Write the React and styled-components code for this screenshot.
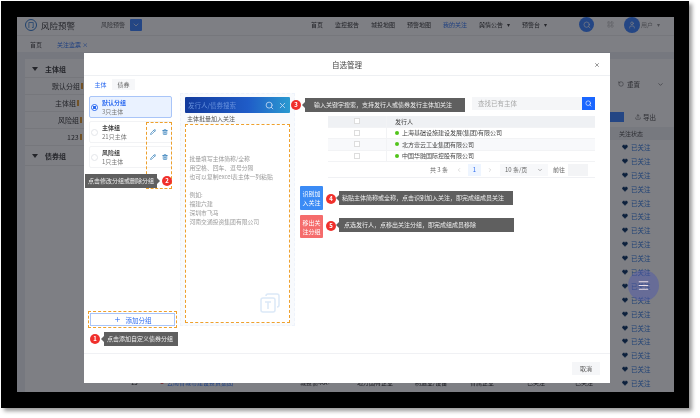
import React from "react";
import styled, { createGlobalStyle } from "styled-components";
import { Search, X, Pencil, Trash2, Plus, Heart, ChevronDown, ChevronLeft, ChevronRight, Menu, Upload, RotateCcw, LayoutGrid, User } from "lucide-react";

const Global = createGlobalStyle`
  html, body { margin: 0; padding: 0; background: #fff; width: 700px; height: 418px; overflow: hidden; }
  * { box-sizing: border-box; }
  body { font-family: "Noto Sans CJK SC", "Noto Sans", sans-serif; color: #555; }
`;
const Frame = styled.div`
  margin: 1px 0 0 1px; width: 688px; height: 407px; padding: 16px 15px 16px 16px;
  background: #000; box-shadow: 3px 3px 4px #999; filter: blur(.6px);
`;
const Page = styled.div`
  position: relative; width: 657px; height: 375px; overflow: hidden;
  background: #eef0f4; display: flex; flex-direction: column;
`;
const Dim = styled.div`position: absolute; inset: 0; background: rgba(8,10,20,.52);`;
const Header = styled.header`
  height: 18px; background: #fff; display: flex; align-items: center; font-size: 6px; color: #333; padding: 0 0 3px 8px; flex: none;
`;
const Logo = styled.div`
  width: 12px; height: 12px; border-radius: 50%; border: 1.5px solid #3a7fd0; color: #3a7fd0; flex: none;
  font-size: 6px; line-height: 9px; text-align: center; font-weight: 700;
`;
const Brand = styled.span`font-size: 8.5px; margin: 0 24px 0 4px; width: 36px; white-space: nowrap; color: #444; flex: none;`;
const Scope = styled.span`width: 29px; color: #666; flex: none;`;
const BlueSquare = styled.span`width: 12px; height: 12px; background: #4488ff; border-radius: 1px; display: flex; align-items: center; justify-content: center; color: #fff; flex: none;`;
const Nav = styled.nav`display: flex; align-items: center; margin-left: 169px; width: 262px; font-size: 6px; gap: 12px; flex: none;`;
const NavItem = styled.span`white-space: nowrap; display: inline-flex; align-items: center; gap: 4px; margin-left: ${p => p.$ml || 0}px; color: ${p => p.$on ? "#3a7cf5" : p.$mute ? "#999" : "#444"};`;
const Circle = styled.span`
  width: ${p => p.$s}px; height: ${p => p.$s}px; border-radius: 50%; background: #4488ff; color: #fff; flex: none; margin-left: ${p => p.$ml || 0}px;
  display: flex; align-items: center; justify-content: center;
`;
const Dots = styled(LayoutGrid)`margin: 0 10px 0 13px; color: #bbb; flex: none;`;
const TabBar = styled.div`
  height: 17px; background: #fff; border-top: 1px solid #eee; display: flex; align-items: center; gap: 15px; padding-left: 13px; font-size: 6px; flex: none;
`;
const TabItem = styled.span`color: ${p => p.$on ? "#3a7cf5" : "#555"};`;
const Content = styled.div`flex: 1; display: flex; padding: 7px 0 0 8px; min-height: 0;`;
const TreeCard = styled.div`width: 90px; background: #fff; padding: 1px 0; font-size: 7px; flex: none;`;
const TreeRow = styled.div`
  height: ${p => p.$h || 17}px; display: flex; align-items: center; padding-left: ${p => p.$indent || 7}px; gap: 7px; border-bottom: 1px solid #eee; color: #444; font-weight: ${p => p.$b ? 700 : 400};
`;
const Caret = styled.span`width: 0; height: 0; border-left: 3px solid transparent; border-right: 3px solid transparent; border-top: 4px solid #444;`;
const TinyMark = styled.span`width: 5px; height: 5px; border: 1px solid #bbb; margin-left: 12px;`;
const OrangeMark = styled.span`width: 2px; height: 6px; background: #e6a23c; margin-left: -6px;`;
const MidTable = styled.div`flex: 1; background: #fff; display: flex; flex-direction: column; justify-content: flex-end; padding: 0 0 3px 16px; font-size: 6px; color: #333;`;
const MidRow = styled.div`display: flex; height: 14px; align-items: center; white-space: nowrap;`;
const MidCell = styled.span`width: ${p => p.$w}px; flex: none; display: flex; align-items: center; gap: 3px; color: ${p => p.$link ? "#3a7cf5" : "#333"};`;
const RedHeart = styled.span`width: 4px; height: 4px; border-radius: 50%; background: #e04040;`;
const RightTable = styled.div`width: 64px; background: #fff; padding: 19px 0 0 0; font-size: 6.5px; display: flex; flex-direction: column; align-items: center; flex: none;`;
const SmallBtn = styled.div`height: 12px; display: flex; align-items: center; gap: 3px; font-size: 6.5px; color: #555; align-self: flex-start; margin-left: 8px;`;
const ExportRow = styled.div`display: flex; align-items: center; align-self: stretch; gap: 11px; margin-top: 21px; height: 12px;`;
const PrimaryStub = styled.span`width: 14px; height: 10px; background: #4488ff; flex: none;`;
const StubOutline = styled.span`display: inline-flex; gap: 2px; align-items: center; color: #555;`;
const StatusHead = styled.div`align-self: stretch; height: 13px; background: #f0f2f5; margin-top: 4px; padding-left: 9px; line-height: 13px; font-size: 6px;`;
const Status = styled.div`
  height: 13.9px; align-self: stretch; padding-left: 12px; display: flex; align-items: center; gap: 3px; color: #3a7fe0; font-size: 6.5px; flex: none;
  svg { color: #123a6a; fill: #123a6a; }
`;
const Modal = styled.section`
  position: absolute; left: 67px; top: 36px; width: 526px; height: 330px; background: #fff; display: flex; flex-direction: column; color: #555;
`;
const ModalHead = styled.div`
  height: 23px; border-bottom: 1px solid #eef0f3; display: flex; align-items: center; justify-content: center; position: relative; font-size: 7.5px; color: #444; flex: none;
  svg { position: absolute; right: 10px; top: 9px; color: #333; }
`;
const Body = styled.div`flex: 1; display: flex; padding-left: 5px; min-height: 0;`;
const LeftCol = styled.div`width: 88px; display: flex; flex-direction: column; padding-top: 3px; flex: none;`;
const ModalTabs = styled.div`display: flex; height: 11px; font-size: 6px; align-items: center; margin-bottom: 6px; background: #f6f7f9; width: 46px;`;
const ModalTab = styled.span`
  width: 23px; height: 11px; line-height: 11px; text-align: center; background: ${p => p.$on ? "#fff" : "transparent"}; color: ${p => p.$on ? "#2d6bf0" : "#666"};
`;
const GroupCard = styled.div`
  width: 83px; height: 22px; margin-bottom: 3px; border-radius: 2px; display: flex; align-items: center; gap: 4px; padding-left: 1px;
  border: 1px solid ${p => p.$on ? "#a9c5f8" : "#f2f3f5"}; background: ${p => p.$on ? "#eaf2ff" : "#fff"}; flex: none; font-size: 6px;
`;
const Radio = styled.span`
  width: 7px; height: 7px; border-radius: 50%; flex: none; border: 1px solid ${p => p.$on ? "#2d6bf0" : "#e4e6ea"};
  background: ${p => p.$on ? "radial-gradient(circle, #2d6bf0 45%, #fff 50%)" : "#fff"};
`;
const GroupText = styled.div`flex: 1; line-height: 9px;`;
const GroupName = styled.div`font-weight: 700; color: ${p => p.$on ? "#2d6bf0" : "#444"};`;
const GroupSub = styled.div`color: #777;`;
const GroupIcons = styled.div`display: flex; gap: 6px; color: #2d7ab8; margin-right: 3px; svg { stroke-width: 2.6; }`;
const AddWrap = styled.div`margin-top: auto; margin-bottom: 25px; width: 89px; margin-left: -1px; height: 17px; border: 1px dashed #eea02c; padding: 1px; flex: none;`;
const AddBtn = styled.div`
  height: 13px; border: 1px solid #a9c5f8; color: #2d6bf0; display: flex; align-items: center; justify-content: center; gap: 5px; font-size: 6.5px;
`;
const CenterPanel = styled.div`
  width: 115px; margin: 17px 0 0 3px; height: 233px; border: 1px dashed #eef3fb; background: #f8fafd; padding: 3px 4px 2px; display: flex; flex-direction: column; flex: none;
`;
const SearchBar = styled.div`
  height: 16px; background: linear-gradient(90deg, #123a9c 0%, #1f5cc8 60%, #2a9ad0 100%); display: flex; align-items: center; gap: 4px; padding: 0 3px; color: #d5e3f7; flex: none; border-radius: 1px;
`;
const SearchHint = styled.span`flex: 1; font-size: 6.5px; color: #6690dc;`;
const BatchLabel = styled.div`font-size: 6px; color: #555; height: 10px; line-height: 10px; margin: 1px 0 0 2px; flex: none;`;
const PasteBox = styled.div`
  flex: 1; background: #fff; border: 1.5px dashed #eea02c; position: relative; padding: 28.5px 3.5px 0; font-size: 5.8px; line-height: 9px; color: #999;
  p { margin: 0 0 9px; white-space: nowrap; }
`;
const Watermark = styled.svg`position: absolute; right: 9px; bottom: 9px;`;
const RightCol = styled.div`flex: 1; padding: 21px 15px 0 5px; display: flex; flex-direction: column; min-width: 0;`;
const FindRow = styled.div`display: flex; justify-content: flex-end; height: 13px; flex: none;`;
const FindInput = styled.div`width: 110px; background: #f5f6f8; font-size: 6.5px; color: #aaa; padding-left: 6px; line-height: 13px;`;
const FindBtn = styled.div`width: 13px; background: #1a66ff; color: #fff; display: flex; align-items: center; justify-content: center;`;
const TableCard = styled.div`margin: 6px 0 0 28px; height: 62px; border-bottom: 1px solid #f0f1f4; display: flex; flex-direction: column; font-size: 6px; flex: none;`;
const TRow = styled.div`
  height: 11.5px; display: flex; align-items: center; flex: none; background: ${p => p.$head ? "#eff1f4" : p.$alt ? "#f8f9fb" : "#fff"}; border-bottom: 1px solid #f2f3f5; color: #444;
`;
const CheckCell = styled.div`width: 59px; display: flex; justify-content: center; border-right: 1px solid #f2f3f5; height: 100%; align-items: center; flex: none;`;
const Check = styled.span`width: 6px; height: 6px; border: 1px solid #ddd; background: #fff;`;
const NameCell = styled.div`padding-left: 8px; display: flex; align-items: center; gap: 3px; white-space: nowrap;`;
const Dot = styled.span`width: 4px; height: 4px; border-radius: 50%; background: #52c41a;`;
const Pager = styled.div`flex: 1; display: flex; align-items: center; justify-content: flex-end; padding-right: 7px; color: #666;`;
const PagerNote = styled.span`white-space: nowrap; margin-right: ${p => p.$mr || 0}px;`;
const PageNum = styled.span`width: 13px; height: 12px; background: #eef5ff; color: #2d6bf0; text-align: center; line-height: 12px; margin: 0 6px;`;
const PagerSelect = styled.span`width: 48px; height: 12px; background: #f7f8fa; margin: 0 5px 0 7px; display: flex; align-items: center; justify-content: space-around;`;
const PagerInput = styled.span`width: 20px; height: 12px; background: #f3f4f6; margin-left: 3px;`;
const ActionBtn = styled.div`
  width: 23px; height: ${p => p.$h}px; margin-top: ${p => p.$mt}px; background: ${p => p.$red ? "#f56c6c" : "#3b8bf5"}; color: #fff; font-size: 6px; line-height: 9px; border-radius: 1px;
  display: flex; align-items: center; justify-content: center; text-align: center; flex: none;
`;
const Footer = styled.div`height: 30px; border-top: 1px solid #f0f1f4; display: flex; justify-content: flex-end; align-items: center; padding-right: 10px; flex: none;`;
const CancelBtn = styled.div`width: 28px; height: 13px; background: #f5f6f8; font-size: 6px; text-align: center; line-height: 13px; color: #555;`;
const Tip = styled.div`
  position: absolute; left: ${p => p.$x}px; top: ${p => p.$y}px; width: ${p => p.$w}px; height: 14px; background: #5f5f5f; color: #eee; font-size: 6px; line-height: 14px; padding-left: ${p => p.$pad || 3}px; white-space: nowrap; overflow: hidden;
`;
const Arrow = styled.span`
  position: absolute; left: ${p => p.$x}px; top: ${p => p.$y}px; width: 0; height: 0; border-top: 3px solid transparent; border-bottom: 3px solid transparent;
  ${p => p.$right ? "border-left: 3px solid #5f5f5f;" : "border-right: 3px solid #5f5f5f;"}
`;
const Badge = styled.span`
  position: absolute; left: ${p => p.$x}px; top: ${p => p.$y}px; width: 10px; height: 10px; border-radius: 50%; background: #f0302c; color: #fff; font-size: 6px; line-height: 10px; text-align: center; font-weight: 700;
`;
const DashBox = styled.div`position: absolute; left: 62px; top: 69px; width: 26px; height: 67px; border: 1.5px dashed #eea02c;`;
const Fab = styled.div`
  position: absolute; left: 611px; top: 253px; width: 31px; height: 31px; border-radius: 50%; background: rgba(80,90,170,.5); color: #ecdfe8; display: flex; align-items: center; justify-content: center;
`;

const tree = [["默认分组", 27], ["主体组", 30], ["风险组", 33], ["123", 42]];
const rows = Array.from({ length: 18 });

export default function App() {
  return (
    <>
      <Global />
      <Frame>
        <Page>
          <Header>
            <Logo>冂</Logo>
            <Brand>风险预警</Brand>
            <Scope>风险预警</Scope>
            <BlueSquare><ChevronDown size={8} /></BlueSquare>
            <Nav>
              <NavItem>首页</NavItem><NavItem>监控报告</NavItem><NavItem>城投地图</NavItem><NavItem>预警地图</NavItem>
              <NavItem $on>我的关注</NavItem><NavItem>舆情公告 <span>▾</span></NavItem><NavItem>预警台 <span>▾</span></NavItem>
            </Nav>
            <Circle $s={15} $ml={6}><Search size={8} /></Circle>
            <Dots size={7} />
            <Circle $s={16}><User size={8} /></Circle>
            <NavItem $ml={1} $mute>用户 <span>▾</span></NavItem>
          </Header>
          <TabBar>
            <TabItem>首页</TabItem>
            <TabItem $on>关注监票 ×</TabItem>
          </TabBar>
          <Content>
            <TreeCard>
              <TreeRow $b $h={18}><Caret />主体组<TinyMark /></TreeRow>
              {tree.map(([n, i]) => <TreeRow key={n} $indent={i}>{n}<OrangeMark /></TreeRow>)}
              <TreeRow $b $h={20}><Caret />债券组<TinyMark /></TreeRow>
            </TreeCard>
            <MidTable>
              <MidRow>
                <MidCell $w={29}>15</MidCell>
                <MidCell $w={140} $link><RedHeart />云南省城市建设投资集团</MidCell>
                <MidCell $w={57}>城投债-AA+</MidCell>
                <MidCell $w={58}>地方国有企业</MidCell>
                <MidCell $w={55}>制造业/设备</MidCell>
                <MidCell $w={57}>省属企业</MidCell>
                <MidCell $w={48}>已关注</MidCell>
                <MidCell $w={18}>已关注</MidCell>
              </MidRow>
            </MidTable>
            <RightTable>
              <SmallBtn><RotateCcw size={6} />重置 <ChevronDown size={7} style={{ marginLeft: 14 }} /></SmallBtn>
              <ExportRow><PrimaryStub /><StubOutline><Upload size={6} />导出</StubOutline></ExportRow>
              <StatusHead>关注状态</StatusHead>
              {rows.map((_, i) => <Status key={i}><Heart size={6} />已关注</Status>)}
            </RightTable>
          </Content>
          <Dim />
          <Modal>
            <ModalHead>自选管理<X size={6} /></ModalHead>
            <Body>
              <LeftCol>
                <ModalTabs><ModalTab $on>主体</ModalTab><ModalTab>债券</ModalTab></ModalTabs>
                <GroupCard $on><Radio $on /><GroupText><GroupName $on>默认分组</GroupName><GroupSub>3只主体</GroupSub></GroupText></GroupCard>
                <GroupCard><Radio /><GroupText><GroupName>主体组</GroupName><GroupSub>21只主体</GroupSub></GroupText><GroupIcons><Pencil size={6} /><Trash2 size={6} /></GroupIcons></GroupCard>
                <GroupCard><Radio /><GroupText><GroupName>风险组</GroupName><GroupSub>1只主体</GroupSub></GroupText><GroupIcons><Pencil size={6} /><Trash2 size={6} /></GroupIcons></GroupCard>
                <AddWrap><AddBtn><Plus size={7} />添加分组</AddBtn></AddWrap>
              </LeftCol>
              <CenterPanel>
                <SearchBar>
                  <SearchHint>发行人/债券搜索</SearchHint>
                  <Search size={9} /><X size={9} />
                </SearchBar>
                <BatchLabel>主体批量加入关注</BatchLabel>
                <PasteBox>
                  <p>批量填写主体简称/全称<br />用空格、回车、逗号分隔<br />也可以复制excel表主体一列粘贴</p>
                  <p>例如:<br />福建六建<br />深圳市飞马<br />河南交通投资集团有限公司</p>
                  <Watermark width="20" height="20" viewBox="0 0 20 20" fill="none" stroke="#dce9f8" strokeWidth="1.5">
                    <path d="M6 3 a2 2 0 0 1 2-2 h9 a2 2 0 0 1 2 2 v9 a2 2 0 0 1-2 2" />
                    <rect x="1" y="5" width="14" height="14" rx="2" />
                    <path d="M5 9 h6 M8 9 v7" />
                  </Watermark>
                </PasteBox>
              </CenterPanel>
              <RightCol>
                <FindRow>
                  <FindInput>查找已有主体</FindInput>
                  <FindBtn><Search size={7} /></FindBtn>
                </FindRow>
                <TableCard>
                  <TRow $head><CheckCell><Check /></CheckCell><NameCell>发行人</NameCell></TRow>
                  <TRow><CheckCell><Check /></CheckCell><NameCell><Dot />上海基础设施建设发展(集团)有限公司</NameCell></TRow>
                  <TRow $alt><CheckCell><Check /></CheckCell><NameCell><Dot />北方壹云工业集团有限公司</NameCell></TRow>
                  <TRow><CheckCell><Check /></CheckCell><NameCell><Dot />中国华融国际控股有限公司</NameCell></TRow>
                  <Pager>
                    <PagerNote $mr={8}>共 3 条</PagerNote>
                    <ChevronLeft size={6} color="#bbb" />
                    <PageNum>1</PageNum>
                    <ChevronRight size={6} color="#bbb" />
                    <PagerSelect>10 条/页<ChevronDown size={6} /></PagerSelect>
                    <PagerNote>前往</PagerNote>
                    <PagerInput />
                  </Pager>
                </TableCard>
                <ActionBtn $h={24} $mt={8}>识别加<br />入关注</ActionBtn>
                <ActionBtn $h={23} $mt={5} $red>移出关<br />注分组</ActionBtn>
              </RightCol>
            </Body>
            <Footer><CancelBtn>取消</CancelBtn></Footer>
            <Tip $x={221} $y={45} $w={160} $pad={9}>输入关键字搜索，支持发行人或债券发行主体加关注</Tip>
            <Arrow $x={218} $y={49} />
            <Badge $x={207} $y={47}>3</Badge>
            <DashBox />
            <Tip $x={1} $y={121} $w={72}>点击修改分组或删除分组</Tip>
            <Arrow $x={73} $y={125} $right />
            <Badge $x={78} $y={123}>2</Badge>
            <Tip $x={255} $y={138} $w={174} $pad={3}>粘贴主体简称或全称，点击识别加入关注，即完成组成员关注</Tip>
            <Arrow $x={252} $y={142} />
            <Badge $x={242} $y={141}>4</Badge>
            <Tip $x={255} $y={165} $w={175} $pad={5}>点选发行人，点移出关注分组，即完成组成员移除</Tip>
            <Arrow $x={252} $y={169} />
            <Badge $x={242} $y={168}>5</Badge>
            <Tip $x={20} $y={279} $w={74}>点击添加自定义债券分组</Tip>
            <Arrow $x={17} $y={283} />
            <Badge $x={6} $y={281}>1</Badge>
          </Modal>
          <Fab><Menu size={13} /></Fab>
        </Page>
      </Frame>
    </>
  );
}
